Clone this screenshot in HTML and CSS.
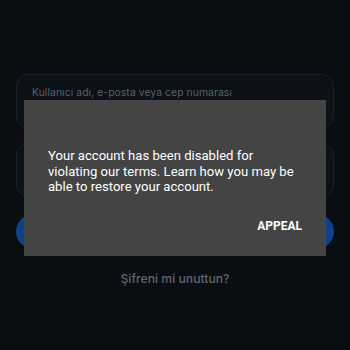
FILE: index.html
```html
<!DOCTYPE html>
<html>
<head>
<meta charset="utf-8">
<link rel="stylesheet" href="styles.css">
</head>
<body>
<main class="login">
  <div class="field"><span class="placeholder">Kullanıcı adı, e-posta veya cep numarası</span></div>
  <div class="field field-2"></div>
  <div class="btn"></div>
  <a class="forgot">Şifreni mi unuttun?</a>
</main>
<div class="dialog">
  <p class="msg">Your account has been disabled for violating our terms. Learn how you may be able to restore your account.</p>
  <div class="actions"><span class="appeal">APPEAL</span></div>
</div>
</body>
</html>
```
FILE: styles.css
```css
html, body {
  margin: 0;
  height: 100%;
  background: #0a0e13;
}
body {
  position: relative;
  overflow: hidden;
}
.login {
  padding: 74px 16px 0;
  display: flex;
  flex-direction: column;
}
.field {
  border: 1px solid #1b2129;
  border-radius: 12px;
  background: #0c1117;
  padding: 7px 15px 0;
  box-sizing: border-box;
  height: 54px;
}
.field-2 {
  margin-top: 15px;
}
.placeholder {
  font-family: "Inter", sans-serif;
  font-size: 10.3px;
  color: #59616a;
  letter-spacing: 0.1px;
}
.btn {
  margin-top: 17px;
  height: 35px;
  border-radius: 18px;
  background: #0d4189;
}
.forgot {
  margin-top: 22px;
  text-align: center;
  font-family: "Inter", sans-serif;
  font-size: 12.2px;
  font-weight: 500;
  color: #5e666f;
}
.dialog {
  position: absolute;
  left: 24px;
  top: 100px;
  width: 302px;
  height: 156px;
  background: #444444;
  box-sizing: border-box;
  padding: 48px 24px 0;
  font-family: "Roboto", sans-serif;
}
.msg {
  margin: 0;
  color: #ffffff;
  font-size: 13.1px;
  line-height: 15.7px;
}
.actions {
  display: flex;
  justify-content: flex-end;
  margin-top: 24px;
}
.appeal {
  color: #ffffff;
  font-size: 12px;
  font-weight: 700;
}
```
